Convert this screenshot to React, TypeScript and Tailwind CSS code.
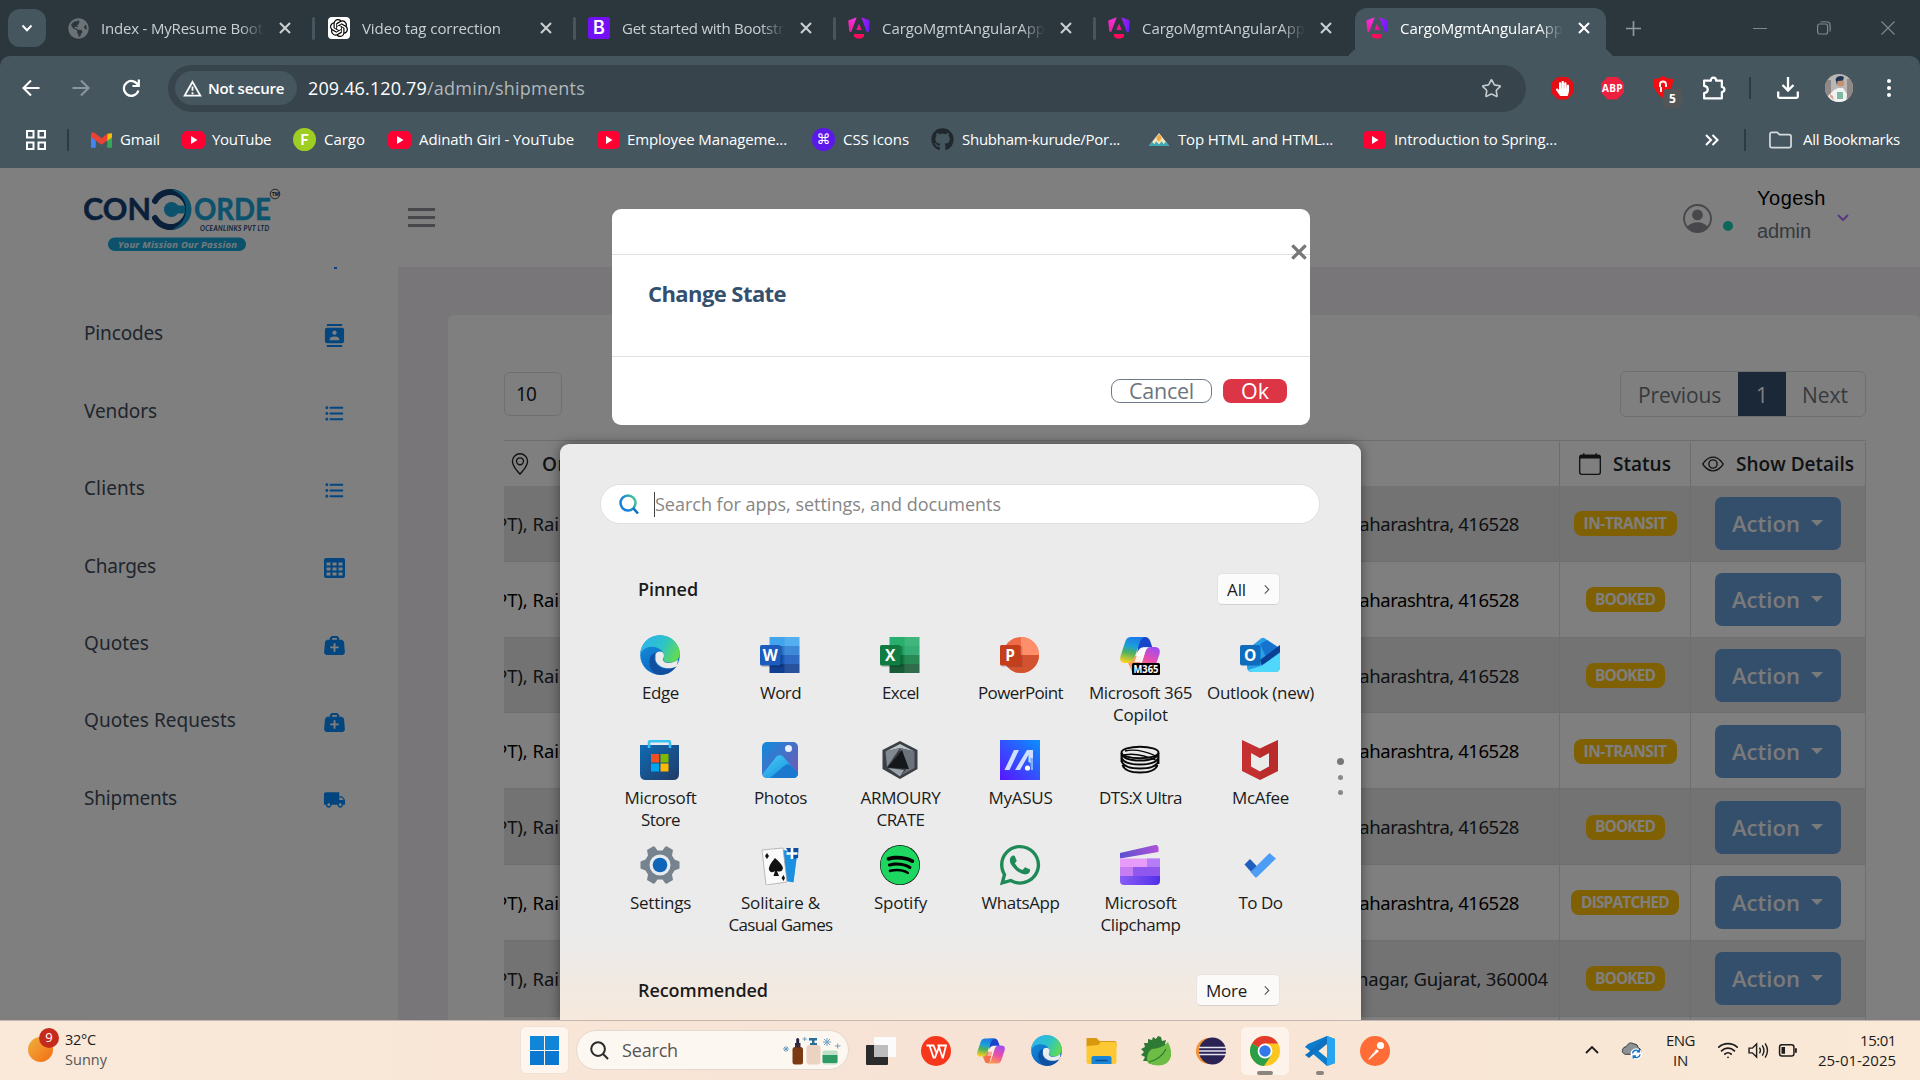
import { useLayoutEffect, useRef, useState, type ReactNode } from "react";
import { FaGithub, FaSpotify, FaWhatsapp, FaHandPaper, FaGlobeAmericas } from "react-icons/fa";
import { SiOpenai } from "react-icons/si";
import { MdContacts, MdFormatListBulleted, MdLocalShipping } from "react-icons/md";
import { BsGeoAlt, BsEye, BsCalendar } from "react-icons/bs";
import { Star, Wifi } from "lucide-react";

/** One line of text, tracked so that it takes up exactly `w` pixels. */
function T({ w, className = "", children }: { w: number; className?: string; children: string }) {
  const ref = useRef<HTMLSpanElement>(null);
  const [ls, setLs] = useState(0);
  useLayoutEffect(() => {
    if (ref.current) setLs((w - ref.current.getBoundingClientRect().width) / children.length);
  }, []);
  return (
    <span ref={ref} className={`inline-block shrink-0 whitespace-nowrap ${className}`} style={{ letterSpacing: `${ls}px` }}>
      {children}
    </span>
  );
}

/* ---------- browser ---------- */

function Angular() {
  return (
    <svg viewBox="0 0 22 22" className="size-[22px] shrink-0">
      <defs>
        <linearGradient id="ngl" x1="0" y1="1" x2="0.500" y2="0">
          <stop offset="0" stopColor="#f5189a" />
          <stop offset="1" stopColor="#f032dc" />
        </linearGradient>
        <linearGradient id="ngr" x1="0" y1="0" x2="1" y2="0.500">
          <stop offset="0" stopColor="#b01ef0" />
          <stop offset="1" stopColor="#6a1cff" />
        </linearGradient>
      </defs>
      <path d="M.2 3.500 8.700.2 3.200 15 1.300 14.500Z" fill="url(#ngl)" />
      <path d="M13.300.2 21.800 3.500 20.700 15.500 18.800 15Z" fill="url(#ngr)" />
      <path d="M11 6.500 13.700 13H8.300Z" fill="#ee1596" />
      <path d="M6 17H16V19.500Q14 21.800 11 21.800T6 19.500Z" fill="#ff0a5c" />
    </svg>
  );
}

function CloseX({ className = "size-3", sw = 2.1 }: { className?: string; sw?: number }) {
  return (
    <svg viewBox="0 0 12 12" className={`shrink-0 ${className}`} fill="none" stroke="currentColor" strokeWidth={sw}>
      <path d="M1 1 11 11M11 1 1 11" />
    </svg>
  );
}

function Tab({ icon, title, w, active = false, last = false }: { icon: ReactNode; title: string; w: number; active?: boolean; last?: boolean }) {
  return (
    <div className={active ? "relative flex h-12 w-[251px] items-center self-end rounded-t-[12px] bg-[#45565f] pb-[8px] pl-[11px] text-white" : "flex h-full w-[260px] items-center text-[#c9d0d3]"}>
      {active && (
        <>
          <span className="absolute bottom-0 -left-3 size-3 overflow-hidden">
            <i className="block size-3 rounded-br-[12px] shadow-[6px_6px_0_0_#45565f]" />
          </span>
          <span className="absolute -right-3 bottom-0 size-3 overflow-hidden">
            <i className="block size-3 rounded-bl-[12px] shadow-[-6px_6px_0_0_#45565f]" />
          </span>
        </>
      )}
      {icon}
      <div className="ml-[12px] w-[163px] overflow-hidden text-[15px] [mask-image:linear-gradient(to_right,black_85%,transparent_100%)]">
        <T w={w}>{title}</T>
      </div>
      <CloseX className="ml-[15px] size-[12px]" />
      {!active && !last && <div className="ml-[21px] h-[23px] w-[3px] rounded-full bg-[#45565f]" />}
    </div>
  );
}

function YouTube() {
  return (
    <span className="flex h-[18px] w-[23px] shrink-0 items-center justify-center rounded-[5px] bg-[#ff0033]">
      <svg viewBox="0 0 8 8" className="size-2">
        <path d="M1 0 7.5 4 1 8Z" fill="#fff" />
      </svg>
    </span>
  );
}

function Browser() {
  return (
    <header className="flex h-[168px] shrink-0 flex-col bg-[#2c373d]">
      <div className="flex h-14 items-center">
        <div className="ml-2 flex h-[38px] w-[38px] shrink-0 items-center justify-center rounded-xl bg-[#45565f]">
          <svg viewBox="0 0 12 12" className="size-3" fill="none" stroke="#fff" strokeWidth="2">
            <path d="M1.5 3.5 6 8.2 10.500 3.5" />
          </svg>
        </div>
        <div className="ml-[22px] flex h-14 shrink-0 items-center">
          <Tab icon={<FaGlobeAmericas className="size-[21px] shrink-0 text-[#6b7276]" />} title="Index - MyResume Bootstrap" w={197} />
          <Tab
            icon={
              <span className="flex size-[22px] shrink-0 items-center justify-center rounded bg-white">
                <SiOpenai className="size-[18px] text-black" />
              </span>
            }
            title="Video tag correction"
            w={139}
          />
          <Tab icon={<span className="flex size-[22px] shrink-0 items-center justify-center rounded-[3px] bg-[#7410f5] font-[Inter] text-[18px] leading-none font-semibold text-white">B</span>} title="Get started with Bootstrap" w={179} />
          <Tab icon={<Angular />} title="CargoMgmtAngularApp" w={163} />
          <Tab icon={<Angular />} title="CargoMgmtAngularApp" w={163} last />
        </div>
        <div className="-ml-[13px] flex h-14">
          <Tab icon={<Angular />} title="CargoMgmtAngularApp" w={163} active />
        </div>
        <svg viewBox="0 0 16 16" className="ml-5 size-[15px]" fill="none" stroke="#8f979b" strokeWidth="1.800">
          <path d="M8 0V16M0 8H16" />
        </svg>
        <div className="mr-[25px] ml-auto flex items-center gap-[50px] text-[#7f888c]">
          <span className="h-px w-[14px] bg-current" />
          <svg viewBox="0 0 14 14" className="size-[14px]" fill="none" stroke="currentColor" strokeWidth="1.2">
            <rect x="0.6" y="3" width="10" height="10" rx="2" />
            <path d="M3.500 1Q11 .2 12.600 2 13.500 5 13 10.500" />
          </svg>
          <svg viewBox="0 0 14 14" className="size-[14px]" fill="none" stroke="currentColor" strokeWidth="1.1">
            <path d="M.5.5 13.500 13.500M13.500.5.5 13.500" />
          </svg>
        </div>
      </div>

      <div className="flex h-16 items-center rounded-t-[10px] bg-[#45565f]">
        <div className="ml-[21px] flex items-center gap-[30px] text-white">
          <svg viewBox="0 0 20 20" className="size-5" fill="none" stroke="currentColor" strokeWidth="2.1">
            <path d="M18.500 10H3M10 2.500 2.500 10 10 17.500" />
          </svg>
          <svg viewBox="0 0 20 20" className="size-5 text-[#8b979d]" fill="none" stroke="currentColor" strokeWidth="2.1">
            <path d="M1.500 10H17M10 2.500 17.500 10 10 17.500" />
          </svg>
          <svg viewBox="0 0 20 20" className="size-5" fill="none" stroke="currentColor" strokeWidth="2.2">
            <path d="M17.300 8A7.400 7.400 0 1 0 17.400 12.500M17.800 1.500V8H11.500" />
          </svg>
        </div>
        <div className="ml-[27px] flex h-[47px] w-[1358px] shrink-0 items-center rounded-full bg-[#38444b] pr-[24px] pl-[7px]">
          <div className="flex h-[34px] w-[122px] items-center rounded-full bg-[#45565f] pl-2">
            <svg viewBox="0 0 20 18" className="h-[17px] w-[19px]" fill="none" stroke="#fff" strokeWidth="1.900">
              <path d="M10 2 18.300 16.500H1.700ZM10 7V11.500M10 13V15" />
            </svg>
            <T w={76} className="ml-1.5 text-[15px] font-semibold text-white">Not secure</T>
          </div>
          <div className="ml-[11px] text-[18px]">
            <T w={119} className="text-white">209.46.120.79</T>
            <T w={158} className="text-[#b0b7bb]">/admin/shipments</T>
          </div>
          <Star className="ml-auto size-[21px] text-[#c3cacd]" strokeWidth={1.900} />
        </div>
        <div className="ml-[25px] flex shrink-0 items-center">
          <span className="flex size-[23px] items-center justify-center bg-[#e60d14] [clip-path:polygon(30%_0,70%_0,100%_30%,100%_70%,70%_100%,30%_100%,0_70%,0_30%)]">
            <FaHandPaper className="size-[15px] text-white" />
          </span>
          <span className="ml-[27px] flex size-[23px] items-center justify-center bg-[#ef1f3f] text-[10px] font-bold text-white [clip-path:polygon(30%_0,70%_0,100%_30%,100%_70%,70%_100%,30%_100%,0_70%,0_30%)]"><T w={21}>ABP</T></span>
          <span className="relative ml-[29px] flex h-[26px] w-[26px]">
            <svg viewBox="0 0 20 22" className="mt-px h-[22px] w-5">
              <path d="M10 0Q14 3 20 3 20.500 16 10 22-.5 16 0 3 6 3 10 0Z" fill="#f20d10" />
              <path d="M7 11V8.500Q7 5.500 10 5.500T13 8.500V11M8 11V16" stroke="#fff" strokeWidth="1.800" fill="none" />
            </svg>
            <span className="absolute -right-[3px] -bottom-[7px] flex h-[19px] w-[19px] items-center justify-center rounded bg-[#545556] text-[12px] font-bold text-white">5</span>
          </span>
          <svg viewBox="0 0 24 24" className="ml-[22px] size-[25px]" fill="none" stroke="#fff" strokeWidth="2.100" strokeLinejoin="round">
            <path d="M3 4.500H9.500Q9.500 1.500 12 1.500T14.500 4.500H20V10.500Q22.500 10.800 22.500 13T20 15.500V21.500H3V16.500Q6.500 16 6.500 13T3 9.500Z" />
          </svg>
          <span className="ml-[23px] h-[22px] w-0.5 bg-[#2f3b41]" />
          <svg viewBox="0 0 22 22" className="ml-[26px] size-[22px]" fill="none" stroke="#fff" strokeWidth="2.300">
            <path d="M11 0V13.500M5.500 8 11 13.500 16.500 8M1.200 14.500V19.500Q1.200 20.800 2.500 20.800H19.500Q20.800 20.800 20.800 19.500V14.500" />
          </svg>
          <svg viewBox="0 0 28 28" className="ml-[26px] size-7">
            <defs>
              <clipPath id="av"><circle cx="14" cy="14" r="14" /></clipPath>
            </defs>
            <g clipPath="url(#av)">
              <rect width="28" height="28" fill="#b9b6b4" />
              <path d="M0 6H6V22H0ZM22 5H28V24H22Z" fill="#8f8887" />
              <path d="M3 22 9 16 13 14 18 14 22 20 21 28H7Z" fill="#f0f2f1" />
              <path d="M12 18H18V25H12Z" fill="#7fb8a2" />
              <path d="M5 20 8 22 9 26 5 23Z" fill="#d6a88c" />
              <circle cx="15.500" cy="9" r="3.600" fill="#c98f74" />
              <path d="M10.500 5Q13 .5 19 3L18 6.500 12.500 7 12 11Z" fill="#1d3352" />
            </g>
          </svg>
          <div className="ml-[34px] flex flex-col gap-[3px]">
            <i className="size-[4px] rounded-full bg-white" />
            <i className="size-[4px] rounded-full bg-white" />
            <i className="size-[4px] rounded-full bg-white" />
          </div>
        </div>
      </div>

      <div className="flex h-12 items-center bg-[#45565f] pb-[9px] text-[15px] text-white">
        <svg viewBox="0 0 20 20" className="ml-[26px] size-5" fill="none" stroke="#fff" strokeWidth="2">
          <path d="M1 1H7.500V7.500H1ZM12.500 1H19V7.500H12.500ZM1 12.500H7.500V19H1ZM12.500 12.500H19V19H12.500Z" />
        </svg>
        <span className="ml-[21px] h-[22px] w-0.5 bg-[#2f3b41]" />
        <svg viewBox="0 0 22 16" className="ml-[22px] h-4 w-[21px]">
          <path d="M0 2V16H5V7Z" fill="#4285f4" />
          <path d="M22 2V16H17V7Z" fill="#34a853" />
          <path d="M17 1.500 22 1V5L17 9Z" fill="#fbbc04" />
          <path d="M0 1.500Q2-1 5 1.500L11 6.200 17 1.500V8.500L11 13 5 8.500 0 5Z" fill="#ea4335" />
        </svg>
        <T w={40} className="ml-[8px]">Gmail</T>
        <span className="ml-[22px]"><YouTube /></span>
        <T w={59} className="ml-[7px]">YouTube</T>
        <span className="ml-[22px] flex size-[23px] items-center justify-center rounded-full bg-[#9dce21] font-[Lato] text-[15px] font-bold">F</span>
        <T w={41} className="ml-2">Cargo</T>
        <span className="ml-[23px]"><YouTube /></span>
        <T w={155} className="ml-2">Adinath Giri - YouTube</T>
        <span className="ml-[23px]"><YouTube /></span>
        <T w={160} className="ml-[7px]">Employee Manageme...</T>
        <span className="ml-[25px] flex size-[23px] items-center justify-center rounded-full bg-[#5b18e8] font-['DejaVu_Sans'] text-[14px]">⌘</span>
        <T w={66} className="ml-[8px]">CSS Icons</T>
        <FaGithub className="ml-[22px] size-[23px] text-[#20282d]" />
        <T w={158} className="ml-[8px]">Shubham-kurude/Por...</T>
        <svg viewBox="0 0 22 14" className="ml-[28px] h-[13px] w-[22px]">
          <path d="M11 0 22 14H0Z" fill="#f4e6c0" />
          <path d="M0 14 3.500 9.500 6 12 8 9 11 12.500 14 9 16 12 18.500 9.500 22 14Z" fill="#3da7b3" />
          <path d="M11 1 14 5 12 9H10L8 5Z" fill="#f0a848" />
        </svg>
        <T w={155} className="ml-[8px]">Top HTML and HTML...</T>
        <span className="ml-[30px]"><YouTube /></span>
        <T w={163} className="ml-[8px]">Introduction to Spring...</T>
        <svg viewBox="0 0 14 12" className="mr-[25px] ml-auto h-3 w-[14px]" fill="none" stroke="#fff" strokeWidth="2">
          <path d="M1 1 6 6 1 11M7.500 1 12.500 6 7.500 11" />
        </svg>
        <span className="h-[22px] w-0.5 bg-[#2f3b41]" />
        <svg viewBox="0 0 24 18" className="ml-[23px] h-[18px] w-[23px]" fill="none" stroke="#d5dadd" strokeWidth="1.800">
          <path d="M1 3Q1 1 3 1H8.500L11 3.500H21Q23 3.500 23 5.500V15Q23 17 21 17H3Q1 17 1 15Z" />
        </svg>
        <T w={97} className="mr-5 ml-[11px]">All Bookmarks</T>
      </div>
    </header>
  );
}

/* ---------- web page ---------- */

function Logo() {
  return (
    <svg viewBox="0 0 200 66" className="h-[66px] w-[200px]">
      <g fontFamily="Lato" fontWeight="700" fontSize="30">
        <text x="-1" y="32" textLength="68" lengthAdjust="spacingAndGlyphs" fill="#143f73" stroke="#143f73" strokeWidth="0.500">CON</text>
        <text x="110" y="32" textLength="77" lengthAdjust="spacingAndGlyphs" fill="#18a5d8" stroke="#18a5d8" strokeWidth="0.500">ORDE</text>
      </g>
      <path d="M71 13A17.500 17.500 0 1 1 71 30" fill="none" stroke="#143f73" strokeWidth="6" strokeLinecap="round" />
      <path d="M87 1.500A20 20 0 0 1 88 41.500Q102 35 102 21T87 1.500Z" fill="#18a5d8" />
      <circle cx="87.500" cy="21.500" r="7.600" fill="#18a5d8" />
      <path d="M90 17.500H101V25.500H90Z" fill="#18a5d8" />
      <text x="116" y="42.500" textLength="69" fontFamily="Lato" fontStyle="italic" fontWeight="700" fontSize="6.500" fill="#143f73">OCEANLINKS PVT LTD</text>
      <circle cx="191" cy="6" r="4.800" fill="none" stroke="#333" strokeWidth="0.900" />
      <text x="187.700" y="8" fontFamily="Liberation Sans" fontSize="5" fontWeight="700" fill="#222">TM</text>
      <rect x="24" y="49.500" width="138" height="13.500" rx="6.700" fill="#18a5d8" />
      <text x="34" y="59.700" textLength="119" fontFamily="Open Sans" fontStyle="italic" fontWeight="700" fontSize="9.500" fill="#e8f4fa">Your Mission Our Passion</text>
    </svg>
  );
}

function Bag() {
  return (
    <svg viewBox="0 0 22 20" className="h-[19px] w-[21px]" fill="currentColor" fillRule="evenodd">
      <path d="M8 0H14L16 2V4H19L21 6 22 18 20 20H2L0 18 1 6 3 4H6V2ZM8.500 2.200V4H13.500V2.200ZM10 7.500V11H6.500V13H10V16.500H12V13H15.500V11H12V7.500Z" />
    </svg>
  );
}

function TableIcon() {
  return (
    <svg viewBox="0 0 21 20" className="h-5 w-[21px]">
      <rect width="21" height="20" rx="2" fill="currentColor" />
      <path d="M2.500 4.500H6.500V7.500H2.500ZM8.500 4.500H12.500V7.500H8.500ZM14.500 4.500H18.500V7.500H14.500ZM2.500 9.500H6.500V12.500H2.500ZM8.500 9.500H12.500V12.500H8.500ZM14.500 9.500H18.500V12.500H14.500ZM2.500 14.500H6.500V17.500H2.500ZM8.500 14.500H12.500V17.500H8.500ZM14.500 14.500H18.500V17.500H14.500Z" fill="#fff" />
    </svg>
  );
}

const nav: [string, number, ReactNode][] = [
  ["Pincodes", 79, <MdContacts className="h-[27px] w-[23px]" />],
  ["Vendors", 73, <MdFormatListBulleted className="size-[23px]" />],
  ["Clients", 61, <MdFormatListBulleted className="size-[23px]" />],
  ["Charges", 72, <TableIcon />],
  ["Quotes", 65, <Bag />],
  ["Quotes Requests", 152, <Bag />],
  ["Shipments", 93, <MdLocalShipping className="size-6" />],
];

const MH = "Maharashtra, 416528";
const rows: [string, number, string, string, number, string][] = [
  [MH, 176, "mr-10", "IN-TRANSIT", 83, "w-[103px]"],
  [MH, 176, "mr-10", "BOOKED", 60, "w-[79px]"],
  [MH, 176, "mr-10", "BOOKED", 60, "w-[79px]"],
  [MH, 176, "mr-10", "IN-TRANSIT", 83, "w-[103px]"],
  [MH, 176, "mr-10", "BOOKED", 60, "w-[79px]"],
  [MH, 176, "mr-10", "DISPATCHED", 88, "w-[108px]"],
  ["nagar, Gujarat, 360004", 191, "mr-[11px]", "BOOKED", 60, "w-[79px]"],
];

function WebPage() {
  return (
    <main className="relative flex h-[852px] shrink-0 flex-col overflow-hidden bg-white">
      <div className="flex h-[99px] shrink-0 items-center">
        <div className="ml-[84px] w-[324px] pt-[7px]"><Logo /></div>
        <div className="flex w-[27px] flex-col gap-[5px]">
          <i className="h-[3px] bg-[#8e8e98]" />
          <i className="h-[3px] bg-[#8e8e98]" />
          <i className="h-[3px] bg-[#8e8e98]" />
        </div>
        <div className="mr-[71px] ml-auto flex items-center">
          <svg viewBox="0 0 28 28" className="mt-0.5 size-[29px] text-[#8f8f99]">
            <circle cx="14" cy="14" r="13" fill="none" stroke="currentColor" strokeWidth="1.800" />
            <circle cx="14" cy="10.500" r="5.200" fill="currentColor" />
            <path d="M4 22Q8 17.500 14 17.500T24 22Q20 27 14 27T4 22Z" fill="currentColor" />
          </svg>
          <i className="mt-4 ml-[11px] size-[10px] rounded-full bg-[#1bcfb4]" />
          <div className="ml-6 flex w-[76px] flex-col items-start pb-[6px] font-['Liberation_Sans'] text-[20px] leading-[33px]">
            <T w={69} className="text-black">Yogesh</T>
            <T w={54} className="text-[#6c757d]">admin</T>
          </div>
          <svg viewBox="0 0 12 8" className="ml-[4px] h-[8px] w-3" fill="none" stroke="#b66dff" strokeWidth="2">
            <path d="M1 1 6 6 11 1" />
          </svg>
        </div>
      </div>

      <div className="flex min-h-0 flex-1">
        <aside className="relative flex w-[398px] shrink-0 flex-col pt-[28px] pr-[52px] pl-[84px]">
          <i className="absolute top-0 left-[334px] h-0.5 w-[3px] bg-[#068cff]" />
          {nav.map(([label, w, icon]) => (
            <div key={label} className="flex h-[77.400px] shrink-0 items-center justify-between">
              <T w={w} className="font-['Noto_Sans'] text-[19px] text-[#3e4b5b]">{label}</T>
              <span className="flex w-[23px] shrink-0 justify-center pt-1 text-[#068cff]">{icon}</span>
            </div>
          ))}
        </aside>

        <section className="flex-1 bg-[#f2ecf4] pt-12 pl-[50px]">
          <div className="h-full overflow-hidden rounded-t-md bg-white pt-[56px] pr-[54px] pl-14">
            <div className="flex h-[46px] items-center justify-between">
              <div className="flex h-[44px] w-[58px] items-center rounded-md border border-[#dcdfe3] pl-[11px] font-['Noto_Sans'] text-[19px] text-[#212529]"><T w={20}>10</T></div>
              <div className="flex h-[46px] items-center overflow-hidden rounded-md border border-[#dcdfe3] text-[21px] text-[#6c757d]">
                <T w={83} className="mr-[17px] ml-[17px] pt-[3px]">Previous</T>
                <span className="flex h-[46px] w-12 items-center justify-center bg-[#34506f] pt-[3px] text-white">1</span>
                <T w={46} className="mr-[17px] ml-[16px] pt-[3px]">Next</T>
              </div>
            </div>

            <div className="mt-[23px] font-['Noto_Sans']">
              <div className="flex h-[46px] border-t border-[#d8dbde] pt-px font-['Open_Sans'] text-[19px] font-semibold text-[#212529]">
                <div className="flex flex-1 items-center pl-[5px]">
                  <BsGeoAlt className="size-[22px]" />
                  <T w={60} className="ml-[11px]">Origin</T>
                </div>
                <div className="flex w-[131px] items-center border-l border-[#d8dbde] pl-[19px]">
                  <BsCalendar className="size-[22px]" />
                  <T w={58} className="ml-[12px]">Status</T>
                </div>
                <div className="flex w-[176px] items-center border-x border-[#d8dbde] pl-[11px]">
                  <BsEye className="size-[22px]" />
                  <T w={118} className="ml-[12px]">Show Details</T>
                </div>
              </div>
              {rows.map(([addr, aw, mr, status, sw, bw], i) => (
                <div key={i} className={`flex h-[75.800px] ${i % 2 ? "bg-white text-black" : "bg-[#e6e6e6] text-[#212529]"}`}>
                  <div className="flex flex-1 items-center justify-between overflow-hidden border-b border-[#dedfe1] pt-px text-[18.500px]">
                    <T w={63} className="-ml-[8px]">PT), Rai</T>
                    <T w={aw} className={mr}>{addr}</T>
                  </div>
                  <div className="flex w-[131px] items-center justify-center border-b border-l border-[#dcdee0] pt-px">
                    <span className={`flex h-[25px] items-center justify-center rounded-[8px] bg-[#ffc107] font-['Open_Sans'] text-[15.500px] font-bold text-white ${bw}`}>
                      <T w={sw}>{status}</T>
                    </span>
                  </div>
                  <div className="flex w-[176px] items-center justify-center border-x border-b border-[#dcdee0] pt-px">
                    <span className="flex h-[53px] w-[126px] items-center rounded-[7px] bg-[#669ed9] pl-[17px] font-['Open_Sans'] text-[22px] font-semibold text-[#f4f4f4]">
                      <T w={68}>Action</T>
                      <i className="mb-px ml-[11px] border-x-[6px] border-t-[6px] border-x-transparent border-t-[#f4f4f4]" />
                    </span>
                  </div>
                </div>
              ))}
              <div className="flex h-4">
                <div className="flex-1" />
                <div className="w-[131px] border-l border-[#dcdee0]" />
                <div className="w-[176px] border-x border-[#dcdee0]" />
              </div>
            </div>
          </div>
        </section>
      </div>

      <div className="absolute inset-0 bg-black/50" />

      <div className="absolute top-[41px] left-[612px] flex h-[216px] w-[698px] flex-col rounded-[9px] bg-white">
        <div className="relative h-[46px] border-b border-[#dee2e6]">
          <CloseX className="absolute top-[35px] right-[3px] size-[16px] text-[#777]" sw={2.5} />
        </div>
        <div className="h-[102px] border-b border-[#dee2e6] pt-[22px] pl-9">
          <T w={138} className="text-[22px] font-bold text-[#34506f]">Change State</T>
        </div>
        <div className="flex gap-[11px] self-end pt-[22px] pr-[23px] text-[21.500px]">
          <span className="flex h-6 w-[101px] items-center justify-center rounded-[9px] border-[1.500px] border-[#6c7a88] pt-px text-[#6c757d]"><T w={65}>Cancel</T></span>
          <span className="flex h-6 w-16 items-center justify-center rounded-[8px] bg-[#dc3545] pt-px text-white"><T w={28}>Ok</T></span>
        </div>
      </div>
    </main>
  );
}

/* ---------- app icons ---------- */

function Edge({ className = "size-10" }: { className?: string }) {
  return (
    <svg viewBox="0 0 40 40" className={className}>
      <defs>
        <linearGradient id="e1" x1="0" x2="1" y1="0.3" y2="0.7"><stop offset="0" stopColor="#2fb5ec" /><stop offset="0.5" stopColor="#2cc3c9" /><stop offset="1" stopColor="#66dc4a" /></linearGradient>
        <linearGradient id="e2" x1="0" x2="0.6" y1="0" y2="1"><stop offset="0" stopColor="#1796dd" /><stop offset="1" stopColor="#0a5fc0" /></linearGradient>
      </defs>
      <circle cx="20" cy="20" r="19.800" fill="url(#e2)" />
      <path d="M.3 19C1 8 9 .2 20 .2 31 .2 39.800 9 39.800 18 39.800 24 35.500 27.500 30 27.500 25.500 27.500 22.500 26 23.500 23.500 24.500 21 24 16 18 13 10 10 3 13 .3 19Z" fill="url(#e1)" />
      <path d="M15.500 18C13 24 15 31 22 33.500 28 35.500 34 32.500 37 30 34 36 28 40 20 40 11 39 8 29 10 23 11.500 19 14.500 18 15.500 18Z" fill="#10509f" />
      <path d="M15.500 19.500C17 15 24 15.500 24 20.500 24 23 22 24 23.500 26 26 29.500 34 28 38 24.500L37 31C30 35.500 18 33.500 15.500 25Z" fill="#ebebeb" />
      <path d="M24 25.500C27 29 35 28 38.600 23L39.800 18Q39.500 27 30 27.500 24.500 27.500 24 25.500Z" fill="#52d36b" />
    </svg>
  );
}

function Office({ letter, bands, box }: { letter: string; bands: string[]; box: string }) {
  return (
    <svg viewBox="0 0 40 40" className="size-10">
      {bands.map((c, i) => (
        <rect key={i} x="9.500" y={2 + i * 9} width="30" height="9" fill={c} />
      ))}
      <path d="M24.500 2H39.500V38H24.500Z" fill="#fff" opacity="0.100" />
      <rect x="1.500" y="11" width="21" height="21" rx="1.500" fill="#000" opacity="0.200" />
      <rect x="0" y="10" width="20.500" height="20.500" rx="1.500" fill={box} />
      <text x="10.200" y="25.700" textAnchor="middle" fontFamily="Open Sans" fontWeight="700" fontSize="15.500" fill="#fff">{letter}</text>
    </svg>
  );
}

function PowerPoint() {
  return (
    <svg viewBox="0 0 40 40" className="size-10">
      <circle cx="21" cy="20" r="18" fill="#ed6c47" />
      <path d="M21 2A18 18 0 0 1 39 20H21Z" fill="#ff8f6b" />
      <path d="M3 20H39A18 18 0 0 1 3 20Z" fill="#d35230" />
      <rect x="1.500" y="11" width="21" height="21" rx="1.500" fill="#000" opacity="0.150" />
      <rect x="0" y="10" width="20.500" height="20.500" rx="1.500" fill="#c43e1c" />
      <text x="10.200" y="25.700" textAnchor="middle" fontFamily="Open Sans" fontWeight="700" fontSize="15.500" fill="#fff">P</text>
    </svg>
  );
}

function Copilot({ tag = false, className = "size-10" }: { tag?: boolean; className?: string }) {
  return (
    <svg viewBox="0 0 40 40" className={className}>
      <defs>
        <linearGradient id="c1" x1="0.500" x2="0.300" y1="0" y2="1"><stop offset="0" stopColor="#1a7ce8" /><stop offset="0.350" stopColor="#1da0d8" /><stop offset="0.600" stopColor="#4cb05f" /><stop offset="1" stopColor="#ffd21c" /></linearGradient>
        <linearGradient id="c2" x1="0.700" x2="0.300" y1="0" y2="1"><stop offset="0" stopColor="#a24cf0" /><stop offset="0.500" stopColor="#ea4fa8" /><stop offset="1" stopColor="#ff9a4a" /></linearGradient>
      </defs>
      <path d="M18 2H25Q29 2 30.500 7L32.500 13H24Q19 13 17.500 18Z" fill="#1b45c8" />
      <path d="M11 2H25Q21 3 19.500 8L14 24Q12.500 28 9 28H5Q-1 28 .5 21L5.500 6Q7 2 11 2Z" fill="url(#c1)" />
      <path d="M29 38H15Q19 37 20.500 32L25.500 16Q27 12 31 12H34.500Q41 12 39.500 19L34.500 34Q33 38 29 38Z" fill="url(#c2)" />
      <path d="M8 28Q12.500 28 14 24L15 21H22L18 36Q12 40 10.500 33Z" fill={tag ? "#ff8c5a" : "#f2653f"} opacity="0.900" />
      <path d="M17.500 18Q19 12 24 12H31Q27 12 25.500 16L22 27H14.500Z" fill="#fff" opacity={tag ? "0.850" : "0.400"} />
      {tag && (
        <>
          <rect x="12" y="28" width="28" height="12" rx="1.500" fill="#000" />
          <text x="26" y="37.600" textAnchor="middle" fontFamily="Open Sans" fontWeight="700" fontSize="9.800" textLength="25" lengthAdjust="spacingAndGlyphs" fill="#fff">M365</text>
        </>
      )}
    </svg>
  );
}

function Outlook() {
  return (
    <svg viewBox="0 0 40 40" className="size-10">
      <path d="M8 14 21 3.500Q23 2.200 25 3.500L40 14V32Q40 37 35 37H12Q7 37 7 32Z" fill="#2a9fe8" />
      <path d="M20 9 27 5 38 12 26 22Z" fill="#1673cf" />
      <path d="M20 25 40 10V17L22 31Z" fill="#0b3f93" />
      <path d="M21 31 40 18V32Q40 37 35 37H12Q9 37 8 35Z" fill="#4fd8fb" />
      <rect y="10" width="20.500" height="20.500" rx="2" fill="#0f6cbd" />
      <text x="10.200" y="25.700" textAnchor="middle" fontFamily="Open Sans" fontWeight="700" fontSize="15.500" fill="#fff">O</text>
    </svg>
  );
}

function Store() {
  return (
    <svg viewBox="0 0 40 40" className="size-10">
      <defs><linearGradient id="st" x1="0" x2="1" y1="0" y2="1"><stop offset="0" stopColor="#0f6bb5" /><stop offset="1" stopColor="#213a66" /></linearGradient></defs>
      <path d="M0 5H39V34Q39 40 33 40H6Q0 40 0 34Z" fill="url(#st)" />
      <path d="M9 8V2.500Q9 1.200 10.500 1.200H28.500Q30 1.200 30 2.500V8" fill="none" stroke="#35c3f5" strokeWidth="2.600" />
      <path d="M11 14H19V22.500H11Z" fill="#f25022" /><path d="M20.500 14H28.500V22.500H20.500Z" fill="#7fba00" />
      <path d="M11 23.500H19V31.500H11Z" fill="#00a4ef" /><path d="M20.500 23.500H28.500V31.500H20.500Z" fill="#ffb900" />
    </svg>
  );
}

function Photos() {
  return (
    <svg viewBox="0 0 40 40" className="size-10">
      <defs>
        <linearGradient id="ph" x1="0.200" x2="1" y1="0" y2="0.700"><stop offset="0" stopColor="#1b86d8" /><stop offset="1" stopColor="#6a5cb8" /></linearGradient>
        <linearGradient id="ph2" x1="0" x2="1" y1="0" y2="1"><stop offset="0" stopColor="#45d0fa" /><stop offset="1" stopColor="#1585d8" /></linearGradient>
      </defs>
      <rect x="2" y="2" width="36" height="36" rx="5" fill="url(#ph)" />
      <path d="M2.500 34 16.500 16.500Q20 13.500 23 16.500L38 33Q38 38 33 38H7Q3 38 2.500 34Z" fill="url(#ph2)" />
      <path d="M10 38 24 26Q28 22.500 32 26.500L38 33Q38 38 33 38Z" fill="#1a78cf" />
      <circle cx="28.500" cy="8.500" r="3.500" fill="#e8eefa" />
    </svg>
  );
}

function Armoury() {
  return (
    <svg viewBox="0 0 40 40" className="size-10">
      <path d="M20 1 37.500 10V29L20 39 2.500 29V10Z" fill="#3b4045" />
      <path d="M20 4 34.500 11.500 20 8 5.500 11.500Z" fill="#b8c0c8" />
      <path d="M5.500 11.500 20 8 7 27Z" fill="#81888f" />
      <path d="M20 8 34.500 11.500V28L20 36 26 30Z" fill="#6b7279" />
      <path d="M22 10 29 29 7.500 27.500Z" fill="#15181b" />
      <path d="M8 28 24 30 20 36.500Z" fill="#9aa2aa" />
    </svg>
  );
}

function MyAsus() {
  return (
    <svg viewBox="0 0 40 40" className="size-10">
      <defs><linearGradient id="as" x1="0" x2="1" y1="1" y2="0"><stop offset="0" stopColor="#5a14ff" /><stop offset="1" stopColor="#0a90ff" /></linearGradient></defs>
      <path d="M0 0H40V40H0Z" fill="url(#as)" />
      <path d="M14 10H19L9.500 30H4.500ZM27 10H33V24L28.500 22V15L20 30H15Z" fill="#cfe0ff" />
      <circle cx="27.500" cy="28" r="2.600" fill="#fff" />
      <path d="M30 18H33V30H31Z" fill="#7fb1ff" />
    </svg>
  );
}

function Dts() {
  return (
    <svg viewBox="0 0 40 40" className="size-10" fill="none" stroke="#080808" strokeWidth="1.900">
      <ellipse cx="20" cy="12.500" rx="18.500" ry="5.800" />
      <path d="M1.500 13Q3 20.500 20 20.500T38.500 13M1.500 17Q3 24.500 20 24.500T38.500 17M1.500 20.500Q3 28.500 20 28.500T38.500 20.500M2.500 25Q5 32.500 20 32.500T37.500 25M1.500 13V22M38.500 13V24" />
      <path d="M5 11Q18 8 36 16M4 15Q18 12 38 21" strokeWidth="1.300" />
    </svg>
  );
}

function McAfee() {
  return (
    <svg viewBox="0 0 40 40" className="size-10">
      <path d="M2 0 20 8.500 38 0V31L20 40 2 31ZM11 13V26.500L20 31.500 29 26.500V13L20 18Z" fill="#c4302f" fillRule="evenodd" />
      <path d="M20 8.500 38 0V31L20 40V31.500L29 26.500V13L20 18Z" fill="#a82428" opacity="0.350" />
    </svg>
  );
}

function Gear() {
  return (
    <svg viewBox="0 0 40 40" className="size-10">
      <path d="M13 1.500Q14 1 15 2L17.500 5.500H22.500L25 2Q26 1 27 1.500L33 5 32 10.500 34.500 14.500 39.500 16.500V23.500L34.500 25.500 32 29.500 33 35 27 38.500Q26 39 25 38L22.500 34.500H17.500L15 38Q14 39 13 38.500L7 35 8 29.500 5.500 25.500.5 23.500V16.500L5.500 14.500 8 10.500 7 5Z" fill="#76828d" />
      <circle cx="20" cy="20" r="10.500" fill="#e6ebf0" />
      <circle cx="20" cy="20" r="7.300" fill="#0f66b8" />
    </svg>
  );
}

function Solitaire() {
  return (
    <svg viewBox="0 0 40 40" className="size-10">
      <path d="M14 3 38 7 34 38 10 34Z" fill="#1c90e0" stroke="#fff" strokeWidth="0.800" />
      <path d="M26 3 38.500 3 38 13 33 14Z" fill="#0e4ea0" />
      <path d="M32 3V14M26.500 8.500H37.500" stroke="#fff" strokeWidth="2.600" />
      <path d="M2 5 23 3 27 37 6 40Z" fill="#fafafa" stroke="#a0a0a0" strokeWidth="0.700" />
      <path d="M15 13Q8 21 9 25 11 29 15 26L13.500 31H19L17 26Q22 28 23 23 22 19 15 13Z" fill="#111" />
      <path d="M7 8 9 11 7 14 5 11ZM23.500 30 25 33 23.500 36 21.500 33Z" fill="#111" />
    </svg>
  );
}

function Clipchamp() {
  return (
    <svg viewBox="0 0 40 40" className="size-10">
      <defs>
        <linearGradient id="cc" x1="0" x2="1"><stop offset="0" stopColor="#5a4fd0" /><stop offset="1" stopColor="#b052d8" /></linearGradient>
        <linearGradient id="cd" x1="0" x2="1"><stop offset="0" stopColor="#8a5cf5" /><stop offset="1" stopColor="#5030e8" /></linearGradient>
      </defs>
      <path d="M0 8 35 0Q38.500-.5 38.500 3V7L0 13.500Z" fill="url(#cc)" />
      <path d="M0 13.500H40V22H0Z" fill="#e79bf8" /><path d="M27 13.500H40V22H27Z" fill="#b57cf8" />
      <path d="M0 22H13V31H0Z" fill="#c77df2" /><path d="M13 22H40V31H13Z" fill="#8f57ee" />
      <path d="M0 31H40V36Q40 40 36 40H4Q0 40 0 36Z" fill="url(#cd)" />
    </svg>
  );
}

function ToDo() {
  return (
    <svg viewBox="0 0 40 40" className="size-10">
      <path d="M4.500 19.500 10 14 20.500 25 15.500 32Z" fill="#1f5fc0" />
      <path d="M10.500 27 29.500 8 36 13.500 17 32Q16 33 15 32Z" fill="#4d9cf5" />
    </svg>
  );
}

const apps: [ReactNode, [string, number][]][] = [
  [<Edge />, [["Edge", 37]]],
  [<Office letter="W" bands={["#41a5ee", "#2b7cd3", "#185abd", "#103f91"]} box="#1b5cbe" />, [["Word", 41]]],
  [<Office letter="X" bands={["#2aae6d", "#21a366", "#107c41", "#185c37"]} box="#107c41" />, [["Excel", 37]]],
  [<PowerPoint />, [["PowerPoint", 85]]],
  [<Copilot tag />, [["Microsoft 365", 103], ["Copilot", 55]]],
  [<Outlook />, [["Outlook (new)", 107]]],
  [<Store />, [["Microsoft", 72], ["Store", 39]]],
  [<Photos />, [["Photos", 53]]],
  [<Armoury />, [["ARMOURY", 80], ["CRATE", 48]]],
  [<MyAsus />, [["MyASUS", 64]]],
  [<Dts />, [["DTS:X Ultra", 83]]],
  [<McAfee />, [["McAfee", 57]]],
  [<Gear />, [["Settings", 61]]],
  [<Solitaire />, [["Solitaire &", 79], ["Casual Games", 104]]],
  [<span className="flex size-10 rounded-full bg-black"><FaSpotify className="size-10 text-[#1ed760]" /></span>, [["Spotify", 53]]],
  [<FaWhatsapp className="-m-[3px] size-[46px] text-[#1f8a57]" />, [["WhatsApp", 78]]],
  [<Clipchamp />, [["Microsoft", 72], ["Clipchamp", 80]]],
  [<ToDo />, [["To Do", 44]]],
];

function Chevron() {
  return (
    <svg viewBox="0 0 6 10" className="h-[9px] w-[6px]" fill="none" stroke="#555" strokeWidth="1.200">
      <path d="M.5.5 5 5 .5 9.500" />
    </svg>
  );
}

function StartMenu() {
  return (
    <div className="absolute top-[444px] left-[560px] flex h-[576px] w-[801px] flex-col rounded-t-[9px] bg-[#ebebeb] bg-linear-to-b from-[#ebebeb] from-85% to-[#f6e9dc] text-[#1b1b1b] shadow-[0_0_12px_rgba(0,0,0,0.45)]">
      <div className="mt-[40px] ml-10 flex h-[40px] w-[720px] shrink-0 items-center rounded-full border border-[#e0e0e0] bg-white pl-[18px]">
        <svg viewBox="0 0 20 20" className="size-5" fill="none" strokeWidth="2.500">
          <defs><linearGradient id="sr" x1="0" x2="1" y1="0.500" y2="0"><stop offset="0.200" stopColor="#1580d8" /><stop offset="1" stopColor="#4fd08a" /></linearGradient></defs>
          <circle cx="9" cy="9" r="7.500" stroke="url(#sr)" />
          <path d="M14 14 19 19.500" stroke="#0f6fc8" />
        </svg>
        <span className="ml-[15px] h-[25px] w-px bg-[#444]" />
        <T w={346} className="text-[18px] text-[#868686]">Search for apps, settings, and documents</T>
      </div>
      <div className="mt-[49px] flex h-[32px] shrink-0 items-center justify-between pr-[81px] pl-[78px]">
        <T w={60} className="text-[18px] font-semibold">Pinned</T>
        <div className="flex h-[32px] w-[63px] items-center justify-between rounded-[5px] border border-b-[#cfcfcf] border-[#e2e2e2] bg-[#fbfbfb] px-[9px] pt-px text-[17px]"><T w={19}>All</T><Chevron /></div>
      </div>
      <div className="flex shrink-0">
        <div className="mt-[30px] ml-10 grid w-[720px] auto-rows-[105px] grid-cols-6">
          {apps.map(([icon, lines], i) => (
            <div key={i} className="flex flex-col items-center text-[17px] leading-[22px]">
              <div className="mb-[7px] flex size-10 shrink-0 items-center justify-center">{icon}</div>
              {lines.map(([t, w]) => (
                <T key={t} w={w} className="ml-px">{t}</T>
              ))}
            </div>
          ))}
        </div>
        <div className="mt-[153px] ml-[16px] flex w-2 flex-col items-center gap-[10px]">
          <i className="size-[7px] rounded-full bg-[#777]" />
          <i className="size-[5px] rounded-full bg-[#888]" />
          <i className="size-[5px] rounded-full bg-[#888]" />
        </div>
      </div>
      <div className="mt-[24px] flex h-8 shrink-0 items-center justify-between pr-[81px] pl-[78px]">
        <T w={130} className="text-[18px] font-semibold">Recommended</T>
        <div className="flex h-[32px] w-[84px] items-center justify-between rounded-[5px] border border-b-[#d5cfc8] border-[#e8e4df] bg-[#fbfaf9] px-[9px] pt-px text-[17px]"><T w={41}>More</T><Chevron /></div>
      </div>
    </div>
  );
}

/* ---------- taskbar ---------- */

function Bottles() {
  return (
    <svg viewBox="0 0 58 30" className="h-[30px] w-[58px]">
      <rect x="9.500" y="12" width="10.500" height="17.500" rx="2.500" fill="#7c3a13" />
      <path d="M12 8H17.500V12.500H12Z" fill="#3a2a3c" /><rect x="13.200" y="3" width="3" height="6" rx="1.500" fill="#2a2440" />
      <rect x="23.500" y="10" width="14" height="19.500" rx="3" fill="#ecd2c0" /><path d="M26 3H34V5.500H31.500V8H34V10H27V8H29V5.500H26Z" fill="#2a6f95" />
      <rect x="39.500" y="15.500" width="15" height="14" rx="2" fill="#bfe0c8" /><path d="M39.500 20H54.500V27Q54.500 28 53 28H41Q39.500 28 39.500 27Z" fill="#2f9a63" />
      <g stroke="#6c9fc0" strokeWidth="1">
        <path d="M0 14H6M3 11V17M1 12 5 16M5 12 1 16M19.500 4H24M21.700 2V6M40 7H48M44 3V11M41 4 47 10M47 4 41 10M52 11H57.500M54.700 8.500V13.500" />
      </g>
    </svg>
  );
}

function Taskbar() {
  return (
    <footer className="relative z-10 flex h-[60px] shrink-0 border-t border-[#c3b9b0] bg-[#fae9d8] bg-linear-to-r from-[#fae9d9] via-[#f7e3d5] to-[#fae9d6] text-[#1c1c1c]">
      <div className="relative mt-[16px] ml-7 h-[25px] w-[25px] rounded-full bg-linear-to-br from-[#eeb13c] to-[#f26a0c]">
        <span className="absolute -top-[9px] left-[11px] flex size-5 items-center justify-center rounded-full bg-[#c42b1c] text-[13px] text-white">9</span>
      </div>
      <div className="mt-[9px] ml-3 flex w-[42px] flex-col items-start text-[14.500px] leading-[20px]">
        <T w={31}>32°C</T>
        <T w={42} className="text-[#555]">Sunny</T>
      </div>
      <div className="mt-[5px] ml-[413px] flex h-12 w-[49px] items-center justify-center rounded-md border border-[#eee2d6] bg-[#fdf5ee]">
        <div className="grid size-[29px] grid-cols-2 gap-px">
          <i className="bg-[#1086d9]" /><i className="bg-[#1086d9]" /><i className="bg-[#0a78d0]" /><i className="bg-[#0a78d0]" />
        </div>
      </div>
      <div className="mt-[9px] ml-[7px] flex h-[40px] w-[273px] items-center rounded-full border border-[#e3d8cd] bg-[#fdf7f1] pr-[7px] pl-[13px]">
        <svg viewBox="0 0 20 20" className="size-[19px]" fill="none" stroke="#2a2a2a" strokeWidth="2.100">
          <circle cx="8.500" cy="8.500" r="7.200" /><path d="M13.500 13.500 19 19" />
        </svg>
        <T w={56} className="ml-[13px] text-[18px] text-[#555]">Search</T>
        <span className="ml-auto"><Bottles /></span>
      </div>
      <div className="ml-[17px] flex h-[59px] items-center">
        <svg viewBox="0 0 30 30" className="size-[30px]">
          <rect y="9" width="22" height="20" rx="1" fill="#2b2b2b" /><rect x="8" y="1" width="22" height="20" rx="1" fill="#fbfbfb" /><path d="M8 9H22V21H8Z" fill="#bdbdbd" />
        </svg>
        <svg viewBox="0 0 30 30" className="ml-[25px] size-[30px]">
          <circle cx="15" cy="15" r="15" fill="#f7371c" />
          <path d="M5.500 9.500H12.500L15.500 17M8.500 9.500 12.500 21.500H14L18 11 21.500 21.500H22L25 9.500H16.500" fill="none" stroke="#fff" strokeWidth="1.800" />
        </svg>
        <Copilot className="ml-[26px] size-7" />
        <Edge className="ml-[26px] size-[31px]" />
        <svg viewBox="0 0 30 28" className="ml-[24px] h-[28px] w-[31px]">
          <path d="M0 1H10L13 4H28Q30 4 30 6V10H0Z" fill="#d9990f" /><path d="M0 9 12 8 14 5H28Q30 5 30 7V25Q30 27 28 27H2Q0 27 0 25Z" fill="#fcc935" />
          <path d="M5 21Q5 19 7 19H23Q25 19 25 21V27H5Z" fill="#1a86d8" /><path d="M9 23.500H21" stroke="#0a4f90" strokeWidth="1.500" />
        </svg>
        <svg viewBox="0 0 30 30" className="ml-[24px] size-[30px]">
          <path d="M17 0 15 3 12 1 11 4 7 3 7 7 3 7 4 11 0 13 3 16 0 19 4 21 2 25 6 25 9 28 26 10 24 8 25 4 21 5 20 1Z" fill="#2d7a35" />
          <path d="M27 6Q34 20 26 27 18 32 7 27 4 18 11 13 22 12 27 6Z" fill="#6dbd45" />
          <path d="M8 26Q20 23 25 13" stroke="#2d7a35" strokeWidth="1.200" fill="none" />
        </svg>
        <svg viewBox="0 0 30 30" className="ml-[25px] size-[30px]">
          <circle cx="13" cy="15" r="13" fill="#f09235" /><circle cx="16.500" cy="15" r="13.500" fill="#2b2353" />
          <path d="M3 11.500H30M3 15H30M3 18.500H30" stroke="#e6e3f0" strokeWidth="1.700" />
        </svg>
        <div className="relative ml-[15px] flex h-12 w-12 items-center justify-center rounded-md bg-[#fdf3ea]">
          <svg viewBox="0 0 30 30" className="size-[30px]">
            <circle cx="15" cy="15" r="15" fill="#fcc520" />
            <path d="M15 15 2 7.500A15 15 0 0 1 28 7.500H15Z" fill="#e23b2e" />
            <path d="M2 7.500A15 15 0 0 0 14 30L21.500 18.700 15 15Z" fill="#2a9e48" />
            <circle cx="15" cy="15" r="7.400" fill="#fff" /><circle cx="15" cy="15" r="5.700" fill="#3378e8" />
          </svg>
          <i className="absolute bottom-0 h-1 w-4 rounded-full bg-[#8b8580]" />
        </div>
        <div className="relative ml-[16px] flex h-12 items-center">
          <svg viewBox="0 0 30 30" className="size-[30px]">
            <path d="M22 0 30 3V27L22 30 0 11 3 8Z" fill="#0b7dcc" /><path d="M22 0 30 3V27L22 30Z" fill="#27a5ee" /><path d="M22 8 10 17 4 22 0 19 22 0Z" fill="#0f72c0" /><path d="M22 8V22L13.500 15Z" fill="#fae9d8" /><path d="M5 15 1.500 12V18Z" fill="#fae9d8" />
          </svg>
          <i className="absolute bottom-0 left-[11px] h-1 w-2 rounded-full bg-[#8b8580]" />
        </div>
        <svg viewBox="0 0 30 30" className="ml-[25px] size-[30px]">
          <circle cx="15" cy="15" r="15" fill="#ff6c37" />
          <path d="M8 24 16 13 19 15 10 23Z" fill="#fff" /><circle cx="20.500" cy="9.500" r="3.600" fill="#fff" /><path d="M17 12 13 18" stroke="#ff6c37" strokeWidth="0.700" />
        </svg>
      </div>
      <div className="mr-6 ml-auto flex h-[58px] items-center">
        <svg viewBox="0 0 14 8" className="h-2 w-[14px]" fill="none" stroke="#1c1c1c" strokeWidth="1.800"><path d="M1 7 7 1 13 7" /></svg>
        <svg viewBox="0 0 22 20" className="ml-[22px] h-[19px] w-[22px]">
          <path d="M4 14Q0 13 1 9 2 6 5 6 8 0 13 3 17 3 17.500 7 21 8 20.500 12L19 14Z" fill="#8d9296" stroke="#2f3336" />
          <circle cx="15.500" cy="13.500" r="6" fill="#fff" /><path d="M11.500 13A4 4 0 0 1 18.500 11M19.500 14A4 4 0 0 1 12.500 16M18.800 8.500V11.500H16M12.300 18.500V15.800H15" fill="none" stroke="#1271c8" strokeWidth="1.400" />
        </svg>
        <div className="ml-[23px] flex w-[29px] flex-col items-center text-[15px] leading-[20px]">
          <T w={29}>ENG</T>
          <T w={15}>IN</T>
        </div>
        <Wifi className="ml-[22px] size-[22px]" strokeWidth={1.900} />
        <svg viewBox="0 0 22 18" className="ml-[9px] h-[17px] w-[21px]" fill="none" stroke="#1c1c1c" strokeWidth="1.500">
          <path d="M1 6.500H4.500L9 2V16L4.500 11.500H1ZM12 6Q14 9 12 12M15 3.500Q18.500 9 15 14.500M18 1.500Q23 9 18 16.500" />
        </svg>
        <svg viewBox="0 0 20 14" className="ml-[9px] h-[13px] w-5"><rect x="0.900" y="0.900" width="15.500" height="12" rx="2.500" fill="none" stroke="#1c1c1c" strokeWidth="1.600" /><path d="M3 3.200H6.800V10.600H3ZM17.500 4.500H19.500V9.500H17.500Z" fill="#1c1c1c" /></svg>
        <div className="ml-5 flex w-[78px] flex-col items-end text-[15px] leading-[20px]">
          <T w={36}>15:01</T>
          <T w={78}>25-01-2025</T>
        </div>
      </div>
    </footer>
  );
}

export default function App() {
  return (
    <div className="relative flex h-[1080px] w-[1920px] flex-col overflow-hidden font-['Open_Sans',sans-serif]">
      <Browser />
      <WebPage />
      <StartMenu />
      <Taskbar />
    </div>
  );
}
